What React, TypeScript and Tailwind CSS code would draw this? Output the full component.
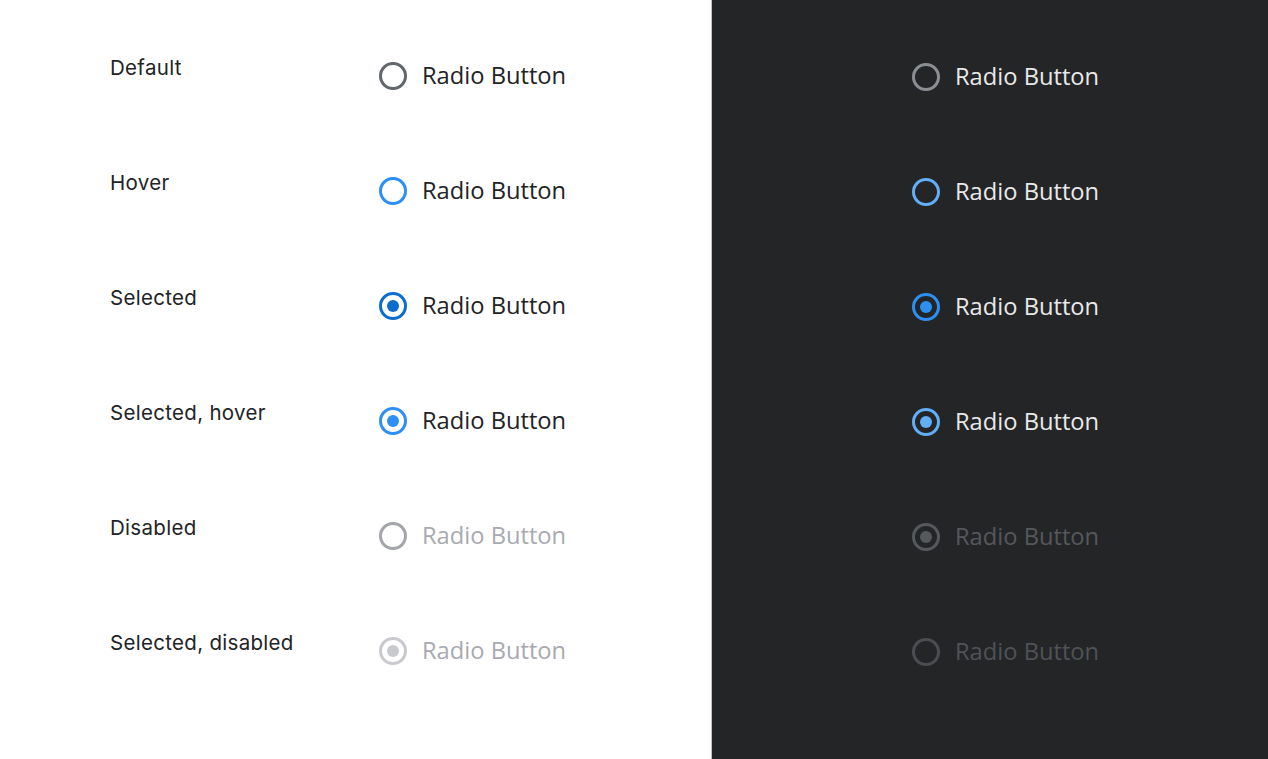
type RadioState = {
  ring: string;
  dot?: string;
  text: string;
};

const labels = ["Default", "Hover", "Selected", "Selected, hover", "Disabled", "Selected, disabled"];

const light: RadioState[] = [
  { ring: "border-[#62666d]", text: "text-[#222326]" },
  { ring: "border-[#2a8ff7]", text: "text-[#222326]" },
  { ring: "border-[#0b6dcc]", dot: "bg-[#0b6dcc]", text: "text-[#222326]" },
  { ring: "border-[#2e8ff5]", dot: "bg-[#2e8ff5]", text: "text-[#222326]" },
  { ring: "border-[#a3a5aa]", text: "text-[#a8aab0]" },
  { ring: "border-[#c9cace]", dot: "bg-[#c9cace]", text: "text-[#a8aab0]" },
];

const dark: RadioState[] = [
  { ring: "border-[#8b8e93]", text: "text-[#e9e9ea]" },
  { ring: "border-[#62aef7]", text: "text-[#e9e9ea]" },
  { ring: "border-[#2e8ff3]", dot: "bg-[#2e8ff3]", text: "text-[#e9e9ea]" },
  { ring: "border-[#62aef7]", dot: "bg-[#62aef7]", text: "text-[#e9e9ea]" },
  { ring: "border-[#55585d]", dot: "bg-[#55585d]", text: "text-[#55585d]" },
  { ring: "border-[#4a4d52]", text: "text-[#4f5257]" },
];

const Radio = ({ s }: { s: RadioState }) => (
  <div className="flex items-center gap-[15px]">
    <div className={`w-[28px] h-[28px] rounded-full border-[3px] ${s.ring} flex items-center justify-center`}>
      {s.dot && <div className={`w-[12px] h-[12px] rounded-full ${s.dot}`} />}
    </div>
    <span className={`text-[23.7px] leading-none ${s.text}`} style={{ fontFamily: '"Open Sans", "Noto Sans", sans-serif' }}>
      Radio Button
    </span>
  </div>
);

export default function App() {
  return (
    <div className="flex w-[1268px] h-[759px] bg-white">
      <div className="w-[711px] pt-[18px] pl-[110px]">
        {labels.map((label, i) => (
          <div key={label} className="flex items-center h-[115px]">
            <span
              className="w-[269px] mb-[15px] text-[20.5px] tracking-[0.3px] leading-none text-[#222326]"
              style={{ fontFamily: 'Inter, "Liberation Sans", sans-serif' }}
            >
              {label}
            </span>
            <Radio s={light[i]} />
          </div>
        ))}
      </div>
      <div className="flex-1 bg-[#242527] border-l border-[#c4c4c4] pt-[19px] pl-[200px]">
        {dark.map((s, i) => (
          <div key={i} className="flex items-center h-[115px]">
            <Radio s={s} />
          </div>
        ))}
      </div>
    </div>
  );
}
